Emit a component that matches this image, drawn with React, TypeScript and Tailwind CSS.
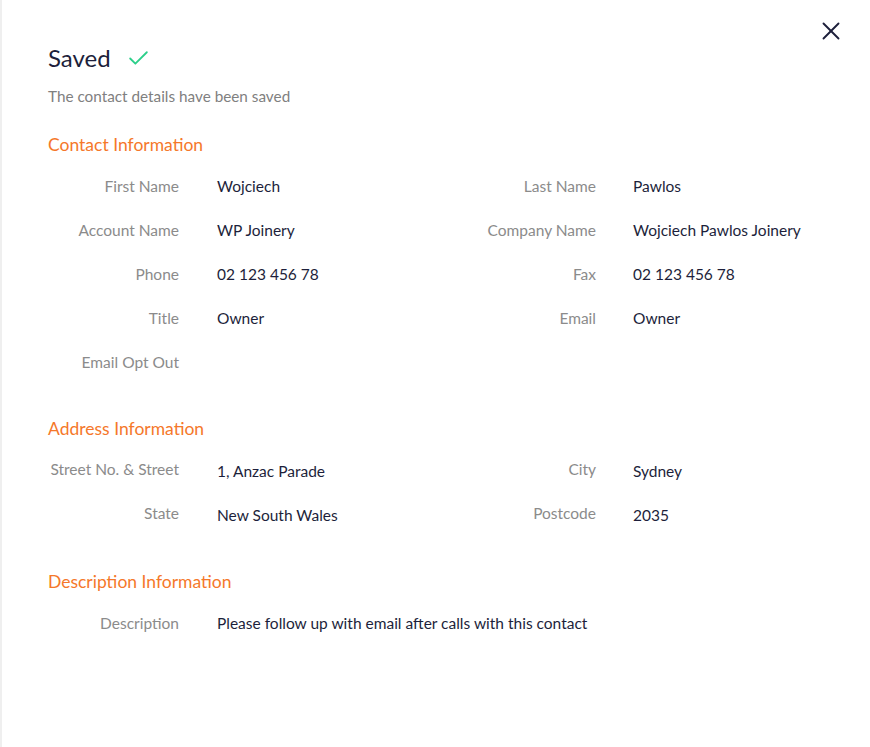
import { X, Check } from "lucide-react";

type Field = { label: string; value?: string };

const contactRows: [Field, Field?][] = [
  [{ label: "First Name", value: "Wojciech" }, { label: "Last Name", value: "Pawlos" }],
  [{ label: "Account Name", value: "WP Joinery" }, { label: "Company Name", value: "Wojciech Pawlos Joinery" }],
  [{ label: "Phone", value: "02 123 456 78" }, { label: "Fax", value: "02 123 456 78" }],
  [{ label: "Title", value: "Owner" }, { label: "Email", value: "Owner" }],
  [{ label: "Email Opt Out" }],
];

const addressRows: [Field, Field?][] = [
  [{ label: "Street No. & Street", value: "1, Anzac Parade" }, { label: "City", value: "Sydney" }],
  [{ label: "State", value: "New South Wales" }, { label: "Postcode", value: "2035" }],
];

function SectionTitle({ children }: { children: React.ReactNode }) {
  return <h3 className="text-[17.5px] leading-[24px] text-[#f5782a]">{children}</h3>;
}

function Row({ left, right, shift }: { left: Field; right?: Field; shift?: boolean }) {
  const labelCls = `w-[131px] shrink-0 text-right text-[#8b8b8b] ${shift ? "-translate-y-px" : ""}`;
  const valueCls = `text-[#1d1f3b] ${shift ? "translate-y-px" : ""}`;
  return (
    <div className="flex h-[44px] items-center text-[15.5px] leading-[20px]">
      <span className={labelCls}>{left.label}</span>
      <span className={`ml-[38px] shrink-0 whitespace-nowrap ${right ? "w-[248px]" : ""} ${valueCls}`}>
        {left.value}
      </span>
      {right && (
        <>
          <span className={labelCls}>{right.label}</span>
          <span className={`ml-[37px] ${valueCls}`}>{right.value}</span>
        </>
      )}
    </div>
  );
}

export default function App() {
  return (
    <div
      className="relative h-[747px] w-[870px] border-l-2 border-[#efefef] bg-white"
      style={{ fontFamily: "Lato, 'Open Sans', sans-serif" }}
    >
      <button className="absolute right-[24px] top-[16px] text-[#1d1f3b]">
        <X size={30} strokeWidth={1.5} />
      </button>

      <div className="pl-[46px] pt-[42px]">
        <div className="flex h-[32px] items-center gap-[15px]">
          <h1 className="text-[24px] leading-[32px] text-[#1d1f3b]">Saved</h1>
          <Check size={25} strokeWidth={1.75} className="text-[#2ccf8a]" />
        </div>
        <p className="mt-[12px] text-[15.3px] leading-[20px] text-[#808080]">
          The contact details have been saved
        </p>

        <div className="mt-[27px]">
          <SectionTitle>Contact Information</SectionTitle>
          <div className="mt-[7px]">
            {contactRows.map(([l, r], i) => (
              <Row key={i} left={l} right={r} />
            ))}
          </div>
        </div>

        <div className="mt-[33px]">
          <SectionTitle>Address Information</SectionTitle>
          <div className="mt-[7px]">
            {addressRows.map(([l, r], i) => (
              <Row key={i} left={l} right={r} shift />
            ))}
          </div>
        </div>

        <div className="mt-[34px]">
          <SectionTitle>Description Information</SectionTitle>
          <div className="mt-[7px]">
            <Row left={{ label: "Description", value: "Please follow up with email after calls with this contact" }} />
          </div>
        </div>
      </div>
    </div>
  );
}
